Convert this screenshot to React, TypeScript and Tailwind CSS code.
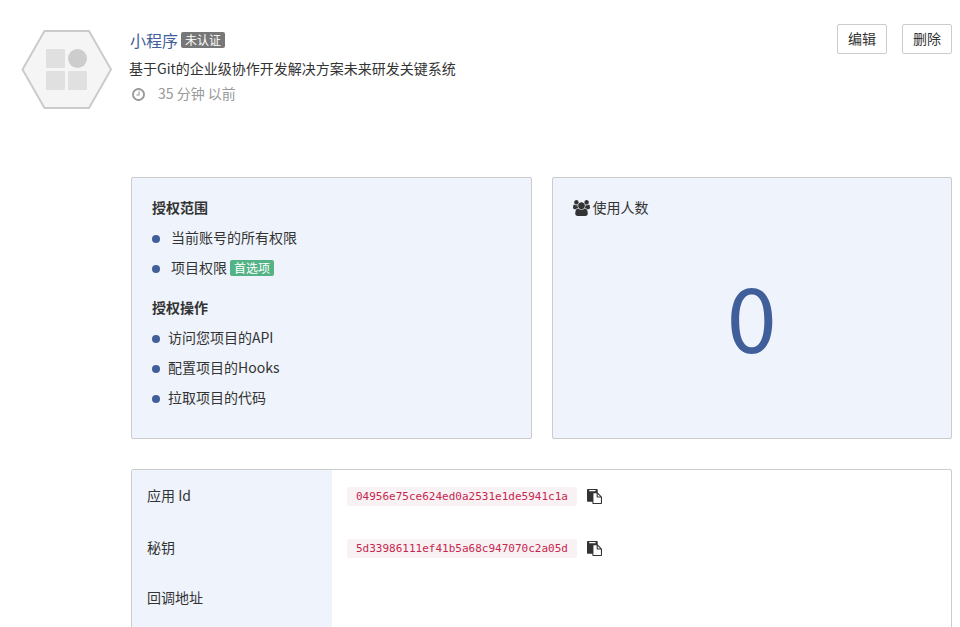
import React from "react"

const scopes = [
  { name: "当前账号的所有权限", preferred: false },
  { name: "项目权限", preferred: true },
]

const operations = ["访问您项目的API", "配置项目的Hooks", "拉取项目的代码"]

const credentials = [
  { label: "应用 Id", value: "04956e75ce624ed0a2531e1de5941c1a" },
  { label: "秘钥", value: "5d33986111ef41b5a68c947070c2a05d" },
]

function AppLogo() {
  return (
    <svg className="w-[92px] h-[80px]" viewBox="0 0 92 80" aria-hidden="true">
      <path d="M24.5 2H69L91 40.5L69 79H24.5L2.5 40.5Z" fill="#f5f5f5" stroke="#cbcbcb" strokeWidth="2" />
      <rect x="26" y="20" width="19" height="19" rx="1" fill="#e0e0e0" />
      <circle cx="57.5" cy="29.5" r="9.5" fill="#cdcdcd" />
      <rect x="26" y="42" width="19" height="19" rx="1" fill="#e0e0e0" />
      <rect x="48" y="42" width="19" height="19" rx="1" fill="#e0e0e0" />
    </svg>
  )
}

function ClockIcon() {
  return (
    <svg className="w-[15px] h-[15px] mt-[2px]" viewBox="0 0 1792 1792" fill="currentColor" aria-hidden="true">
      <path d="M1024 544v448q0 14-9 23t-23 9h-320q-14 0-23-9t-9-23v-64q0-14 9-23t23-9h224v-352q0-14 9-23t23-9h64q14 0 23 9t9 23zm416 352q0-148-73-273t-198-198-273-73-273 73-198 198-73 273 73 273 198 198 273 73 273-73 198-198 73-273zm224 0q0 209-103 385.5t-279.5 279.5-385.5 103-385.5-103-279.5-279.5-103-385.5 103-385.5 279.5-279.5 385.5-103 385.5 103 279.5 279.5 103 385.5z" />
    </svg>
  )
}

function UsersIcon() {
  return (
    <svg className="w-[17px] h-4 mt-[2px]" viewBox="-64 0 1920 1792" fill="currentColor" aria-hidden="true">
      <path d="M529 896q-162 5-265 128h-134q-82 0-138-40.5t-56-118.5q0-353 124-353 6 0 43.5 21t97.5 42.5 119 21.5q67 0 133-23-5 37-5 66 0 139 81 256zm1071 637q0 120-73 189.5t-194 69.5h-874q-121 0-194-69.5t-73-189.5q0-53 3.5-103.5t14-109 26.5-108.5 43-97.5 62-81 85.5-53.5 111.5-20q10 0 43 21.5t73 48 107 48 135 21.5 135-21.5 107-48 73-48 43-21.5q61 0 111.5 20t85.5 53.5 62 81 43 97.5 26.5 108.5 14 109 3.5 103.5zm-1024-1277q0 106-75 181t-181 75-181-75-75-181 75-181 181-75 181 75 75 181zm704 384q0 159-112.5 271.5t-271.5 112.5-271.5-112.5-112.5-271.5 112.5-271.5 271.5-112.5 271.5 112.5 112.5 271.5zm576 225q0 78-56 118.5t-138 40.5h-134q-103-123-265-128 81-117 81-256 0-29-5-66 66 23 133 23 59 0 119-21.5t97.5-42.5 43.5-21q124 0 124 353zm-128-609q0 106-75 181t-181 75-181-75-75-181 75-181 181-75 181 75 75 181z" />
    </svg>
  )
}

function PasteIcon() {
  return (
    <svg className="w-[15px] h-[15px] mt-px" viewBox="0 0 1792 1792" fill="currentColor" aria-hidden="true">
      <path d="M768 1664h896v-640h-416q-40 0-68-28t-28-68v-416h-384v1152zm256-1440v-64q0-13-9.5-22.5t-22.5-9.5h-704q-13 0-22.5 9.5t-9.5 22.5v64q0 13 9.5 22.5t22.5 9.5h704q13 0 22.5-9.5t9.5-22.5zm256 672h299l-299-299v299zm512 128v672q0 40-28 68t-68 28h-960q-40 0-68-28t-28-68v-160h-544q-40 0-68-28t-28-68v-1344q0-40 28-68t68-28h1088q40 0 68 28t28 68v328q21 13 36 28l408 408q28 28 48 76t20 88z" />
    </svg>
  )
}

function Bullet() {
  return <span className="w-2 h-2 mt-1 rounded-full bg-[#405e9a]" />
}

export default function App() {
  return (
    <div className="h-screen overflow-hidden bg-white pl-5 pr-2 pt-6 text-sm text-[#333] font-['Noto_Sans_CJK_SC',sans-serif]">
      <header className="flex items-start">
        <div className="w-[109px] pt-[5px]">
          <AppLogo />
        </div>
        <div className="flex-1 pt-1">
          <div className="flex items-center gap-[3px] h-6 pl-px">
            <a href="#" className="text-base leading-6 text-[#405e9a]">小程序</a>
            <span className="h-4 px-1 rounded-xs bg-[#777] text-xs leading-4 text-white">未认证</span>
          </div>
          <p className="h-8 leading-8">基于Git的企业级协作开发解决方案未来研发关键系统</p>
          <div className="flex items-center gap-3 h-4 mt-px pl-[2px] text-[#999]">
            <ClockIcon />
            <span className="leading-4">35 分钟 以前</span>
          </div>
        </div>
        <div className="flex gap-[15px]">
          <button type="button" className="h-[30px] px-[10px] pb-[2px] border border-[#ccc] rounded-xs bg-white">编辑</button>
          <button type="button" className="h-[30px] px-[10px] pb-[2px] border border-[#ccc] rounded-xs bg-white">删除</button>
        </div>
      </header>

      <main className="pl-[111px] pt-[68px]">
        <div className="grid grid-cols-2 gap-5">
          <section className="h-[262px] px-5 pt-[14px] border border-[#ccc] rounded-xs bg-[#eff3fb] leading-[30px]">
            <h2 className="font-bold">授权范围</h2>
            <ul className="mb-[10px]">
              {scopes.map(scope => (
                <li key={scope.name} className="flex items-center">
                  <Bullet />
                  <span className="pl-[11px] pr-[3px]">{scope.name}</span>
                  {scope.preferred && (
                    <span className="h-4 mt-[2px] px-1 rounded-xs bg-[#54b287] text-xs leading-4 text-white">首选项</span>
                  )}
                </li>
              ))}
            </ul>
            <h2 className="font-bold">授权操作</h2>
            <ul>
              {operations.map(name => (
                <li key={name} className="flex items-center gap-2">
                  <Bullet />
                  {name}
                </li>
              ))}
            </ul>
          </section>

          <section className="h-[262px] px-5 pt-[14px] border border-[#ccc] rounded-xs bg-[#eff3fb]">
            <h2 className="flex items-center gap-[3px] leading-[30px]">
              <UsersIcon />
              使用人数
            </h2>
            <p className="pt-[42px] text-center text-[90px] leading-[100px] text-[#405e9a]">0</p>
          </section>
        </div>

        <div className="mt-[30px] border border-[#ccc] rounded-xs overflow-hidden">
          <table className="w-full">
            <tbody>
              {credentials.map(item => (
                <tr key={item.label} className="h-[52px]">
                  <th scope="row" className="w-[200px] px-[15px] pb-[3px] bg-[#eff3fb] text-left font-normal">{item.label}</th>
                  <td className="px-[15px]">
                    <div className="flex items-center gap-[10px]">
                      <code className="h-[19px] px-[9px] rounded-xs bg-[#f9f2f4] text-[#c7254e] text-[11px] leading-[19px] font-['DejaVu_Sans_Mono',monospace]">{item.value}</code>
                      <button type="button" aria-label="复制">
                        <PasteIcon />
                      </button>
                    </div>
                  </td>
                </tr>
              ))}
              <tr className="h-[80px]">
                <th scope="row" className="w-[200px] px-[15px] pt-[13px] bg-[#eff3fb] text-left align-top font-normal">回调地址</th>
                <td />
              </tr>
            </tbody>
          </table>
        </div>
      </main>
    </div>
  )
}
